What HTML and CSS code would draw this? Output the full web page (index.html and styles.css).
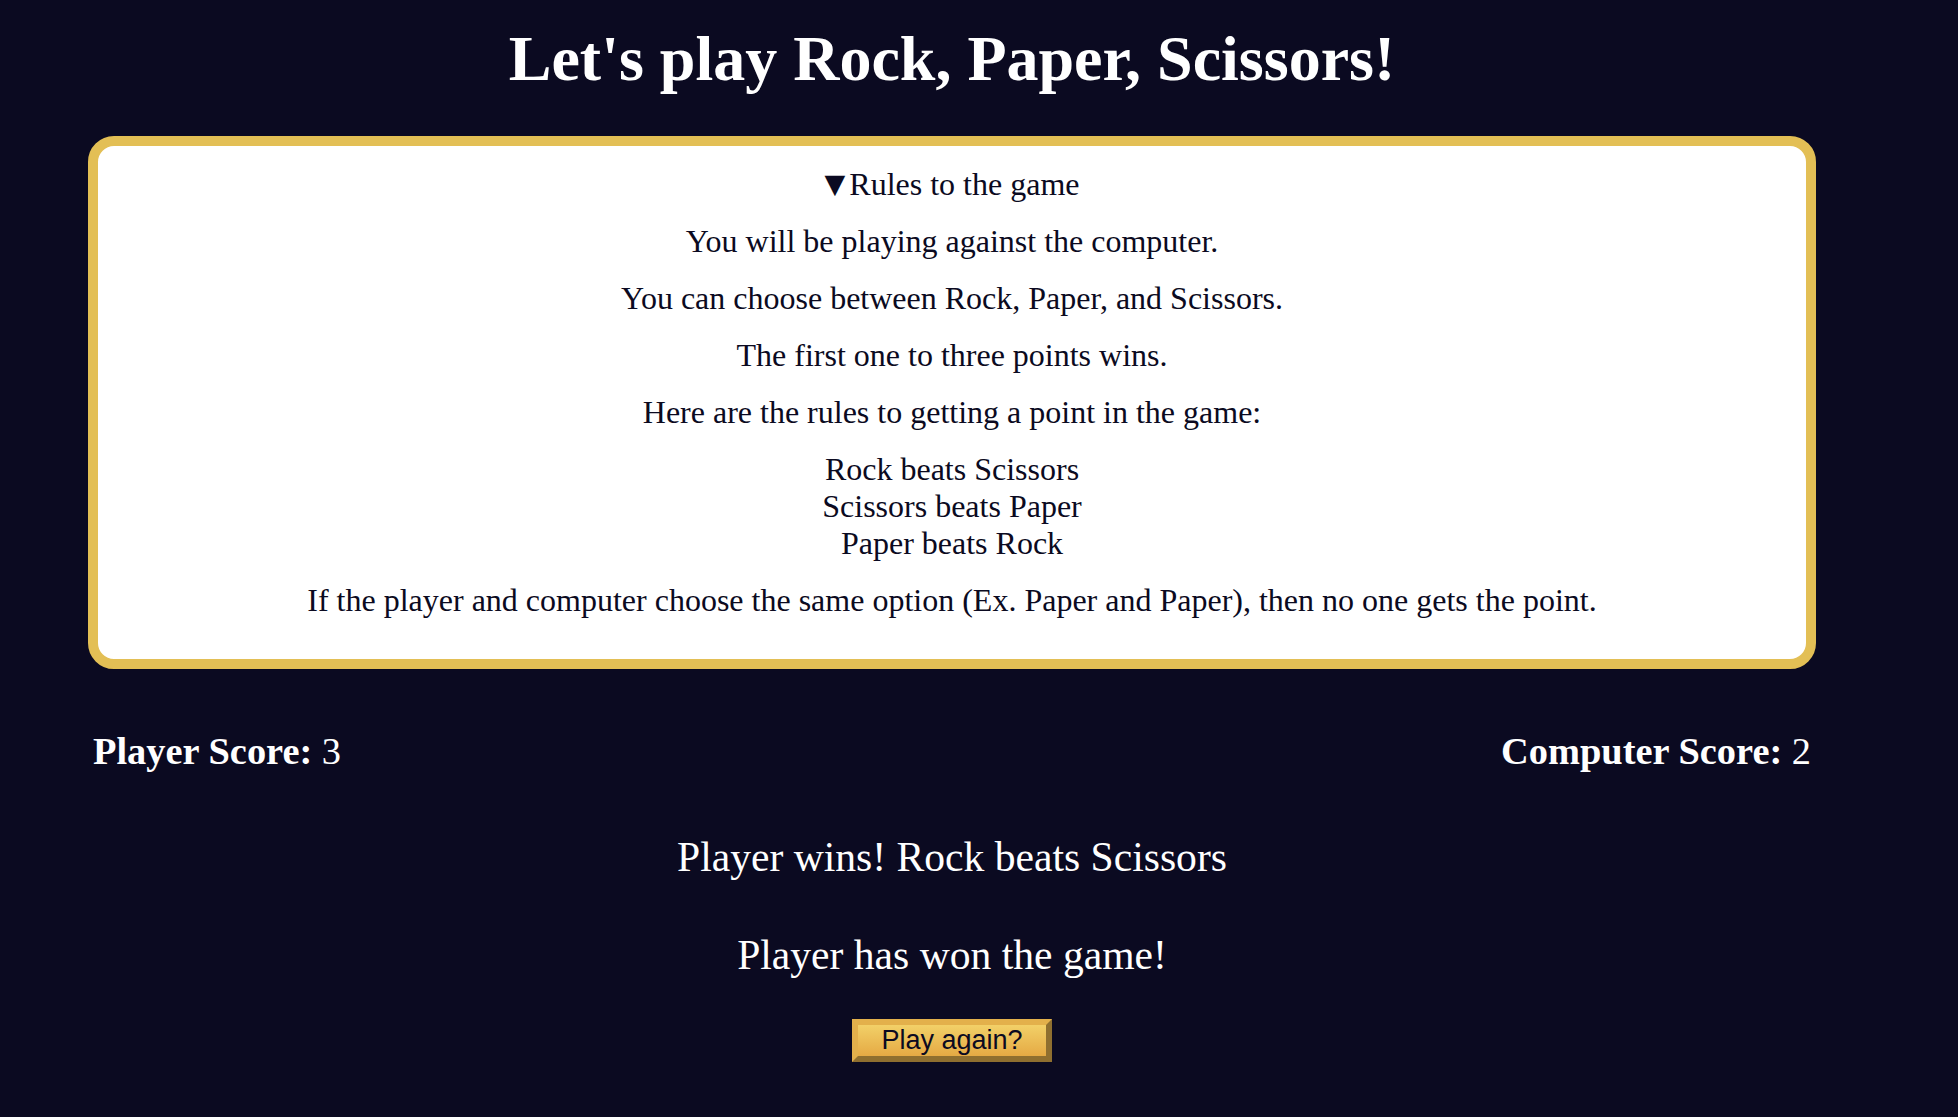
FILE: index.html
```html
<!DOCTYPE html>
<html lang="en">
<head>
<meta charset="utf-8">
<title>Rock, Paper, Scissors</title>
<link rel="stylesheet" href="styles.css">
</head>
<body>
<main class="page">
  <h1 class="title">Let's play Rock, Paper, Scissors!</h1>
  <details class="rules" open>
    <summary class="rules-summary">Rules to the game</summary>
    <p class="rule">You will be playing against the computer.</p>
    <p class="rule">You can choose between Rock, Paper, and Scissors.</p>
    <p class="rule">The first one to three points wins.</p>
    <p class="rule">Here are the rules to getting a point in the game:</p>
    <p class="rule">Rock beats Scissors<br>Scissors beats Paper<br>Paper beats Rock</p>
    <p class="rule">If the player and computer choose the same option (Ex. Paper and Paper), then no one gets the point.</p>
  </details>
  <div class="scores">
    <div class="score"><strong>Player Score:</strong> 3</div>
    <div class="score"><strong>Computer Score:</strong> 2</div>
  </div>
  <p class="message message-round">Player wins! Rock beats Scissors</p>
  <p class="message message-final">Player has won the game!</p>
  <div class="actions">
    <button class="again">Play again?</button>
  </div>
</main>
</body>
</html>
```
FILE: styles.css
```css
html, body {
  margin: 0;
  padding: 0;
}
body {
  background: #0b0a21;
  color: #ffffff;
  font-family: "Liberation Serif", "Times New Roman", serif;
  font-size: 32px;
}
.page {
  width: 1728px;
  margin-left: 88px;
  padding-top: 22px;
}
.title {
  margin: 0 0 40px;
  font-size: 64px;
  font-weight: bold;
  text-align: center;
  line-height: 74px;
}
.rules {
  background: #ffffff;
  color: #0b0a21;
  border: 10px solid #e3bf55;
  border-radius: 26px;
  padding: 20px;
  text-align: center;
  font-size: 32px;
  line-height: 37px;
}
.rules-summary {
  cursor: pointer;
  list-style: none;
  height: 37px;
}
.rules-summary::-webkit-details-marker {
  display: none;
}
.rules-summary::before {
  content: "\25BC";
  font-family: "DejaVu Sans", sans-serif;
  font-size: 27px;
  line-height: 1;
  margin-right: 4px;
  vertical-align: 2px;
}
.rule {
  margin: 20px 0;
}
.scores {
  display: flex;
  justify-content: space-between;
  padding: 0 5px;
  margin-top: 60px;
  font-size: 38.4px;
  line-height: 44px;
}
.message {
  text-align: center;
  font-size: 41.6px;
  line-height: 48px;
  margin: 0;
}
.message-round {
  margin-top: 60px;
}
.message-final {
  margin-top: 50px;
}
.actions {
  display: flex;
  justify-content: center;
  margin-top: 40px;
}
.again {
  font-family: "Liberation Sans", Arial, sans-serif;
  font-size: 27px;
  line-height: 29px;
  white-space: nowrap;
  color: #0b0a21;
  background: linear-gradient(#f2d068, #e5aa44);
  border: 6px outset #e3b04b;
  padding: 0;
  width: 200px;
  height: 43px;
  box-sizing: border-box;
}
```
